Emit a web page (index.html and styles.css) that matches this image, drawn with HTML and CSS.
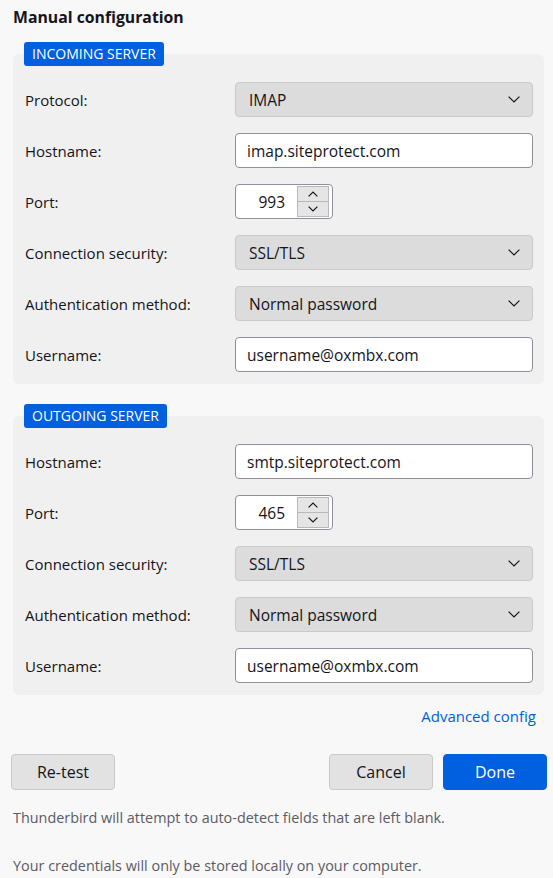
FILE: index.html
```html
<!DOCTYPE html>
<html lang="en">
<head>
<meta charset="utf-8">
<title>Manual configuration</title>
<link rel="stylesheet" href="styles.css">
</head>
<body>
<main class="page">
  <h1 class="title">Manual configuration</h1>

  <section class="group">
    <div class="badge">INCOMING SERVER</div>
    <div class="panel">
      <label class="label">Protocol:</label>
      <div class="select"><span>IMAP</span><svg class="chev" width="12" height="7" viewBox="0 0 12 7"><polyline points="0.6,0.6 6,6 11.4,0.6"/></svg></div>

      <label class="label">Hostname:</label>
      <div class="input">imap.siteprotect.com</div>

      <label class="label">Port:</label>
      <div class="port"><span class="port-val">993</span><span class="spin"><span class="spin-btn"><svg width="10" height="6" viewBox="0 0 10 6"><polyline points="0.6,5.4 5,1 9.4,5.4"/></svg></span><span class="spin-btn"><svg width="10" height="6" viewBox="0 0 10 6"><polyline points="0.6,0.6 5,5 9.4,0.6"/></svg></span></span></div>

      <label class="label">Connection security:</label>
      <div class="select"><span>SSL/TLS</span><svg class="chev" width="12" height="7" viewBox="0 0 12 7"><polyline points="0.6,0.6 6,6 11.4,0.6"/></svg></div>

      <label class="label">Authentication method:</label>
      <div class="select"><span>Normal password</span><svg class="chev" width="12" height="7" viewBox="0 0 12 7"><polyline points="0.6,0.6 6,6 11.4,0.6"/></svg></div>

      <label class="label">Username:</label>
      <div class="input">username@oxmbx.com</div>
    </div>
  </section>

  <section class="group group-out">
    <div class="badge">OUTGOING SERVER</div>
    <div class="panel">
      <label class="label">Hostname:</label>
      <div class="input">smtp.siteprotect.com</div>

      <label class="label">Port:</label>
      <div class="port"><span class="port-val">465</span><span class="spin"><span class="spin-btn"><svg width="10" height="6" viewBox="0 0 10 6"><polyline points="0.6,5.4 5,1 9.4,5.4"/></svg></span><span class="spin-btn"><svg width="10" height="6" viewBox="0 0 10 6"><polyline points="0.6,0.6 5,5 9.4,0.6"/></svg></span></span></div>

      <label class="label">Connection security:</label>
      <div class="select"><span>SSL/TLS</span><svg class="chev" width="12" height="7" viewBox="0 0 12 7"><polyline points="0.6,0.6 6,6 11.4,0.6"/></svg></div>

      <label class="label">Authentication method:</label>
      <div class="select"><span>Normal password</span><svg class="chev" width="12" height="7" viewBox="0 0 12 7"><polyline points="0.6,0.6 6,6 11.4,0.6"/></svg></div>

      <label class="label">Username:</label>
      <div class="input">username@oxmbx.com</div>
    </div>
  </section>

  <div class="adv"><a class="link" href="#">Advanced config</a></div>

  <div class="actions">
    <button class="btn">Re-test</button>
    <div class="spacer"></div>
    <button class="btn">Cancel</button>
    <button class="btn btn-primary">Done</button>
  </div>

  <p class="note">Thunderbird will attempt to auto-detect fields that are left blank.</p>
  <p class="note note-2">Your credentials will only be stored locally on your computer.</p>
</main>
</body>
</html>
```

FILE: styles.css
```css
html, body {
  margin: 0;
  padding: 0;
  background: #f8f8f8;
}

body {
  font-family: "Open Sans", "Noto Sans", sans-serif;
  color: #15141a;
  font-size: 15px;
}

.page {
  display: flex;
  flex-direction: column;
  padding: 5px 9px 0 13px;
}

.title {
  margin: 0;
  font-size: 15.8px;
  font-weight: 700;
  line-height: 24px;
}

.group {
  display: flex;
  flex-direction: column;
  margin-top: 13px;
}

.group-out {
  margin-top: 20px;
}

.badge {
  align-self: flex-start;
  margin-left: 11px;
  margin-bottom: -12px;
  position: relative;
  z-index: 1;
  background: #0060df;
  color: #fff;
  font-size: 14px;
  line-height: 24px;
  height: 24px;
  padding: 0 8px;
  border-radius: 3px;
}

.panel {
  background: #f0f0f0;
  border-radius: 6px;
  padding: 28px 11px 12px 12px;
  display: grid;
  grid-template-columns: 210px 1fr;
  row-gap: 16px;
  align-items: center;
}

.label {
  font-size: 15px;
}

.select,
.input,
.port {
  height: 35px;
  box-sizing: border-box;
  border-radius: 4px;
  font-size: 15.5px;
  display: flex;
  align-items: center;
}

.select {
  background: #dcdcdc;
  border: 1px solid #cacaca;
  padding: 0 12px 0 13px;
  justify-content: space-between;
}

.chev polyline,
.spin-btn polyline {
  fill: none;
  stroke: #15141a;
  stroke-width: 1.2;
}

.input {
  background: #fff;
  border: 1px solid #8f8f9d;
  padding: 0 11px;
}

.port {
  width: 98px;
  background: #fff;
  border: 1px solid #8f8f9d;
  padding: 1px 3px 1px 0;
  justify-content: flex-end;
}

.port-val {
  flex: 1;
  text-align: right;
  padding-right: 12px;
}

.spin {
  width: 32px;
  height: 31px;
  display: flex;
  flex-direction: column;
  border: 1px solid #b8b8b8;
  box-sizing: border-box;
}

.spin-btn {
  flex: 1;
  background: #e5e5e5;
  display: flex;
  align-items: center;
  justify-content: center;
}

.spin-btn + .spin-btn {
  border-top: 1px solid #b8b8b8;
}

.adv {
  display: flex;
  justify-content: flex-end;
  padding: 9px 8px 0 0;
}

.link {
  color: #0060df;
  text-decoration: none;
  font-size: 15px;
  line-height: 24px;
}

.actions {
  display: flex;
  gap: 10px;
  margin: 26px -3px 0 -2px;
}

.spacer {
  flex: 1;
}

.btn {
  font-family: inherit;
  font-size: 16px;
  color: #15141a;
  height: 36px;
  width: 104px;
  border-radius: 4px;
  background: #e2e2e2;
  border: 1px solid #cacaca;
  padding: 0;
}

.btn-primary {
  background: #0060df;
  border-color: #0060df;
  color: #fff;
}

.note {
  margin: 18px 0 0;
  font-size: 14.4px;
  color: #5b5b66;
  line-height: 20px;
}

.note-2 {
  margin-top: 28px;
}
```
